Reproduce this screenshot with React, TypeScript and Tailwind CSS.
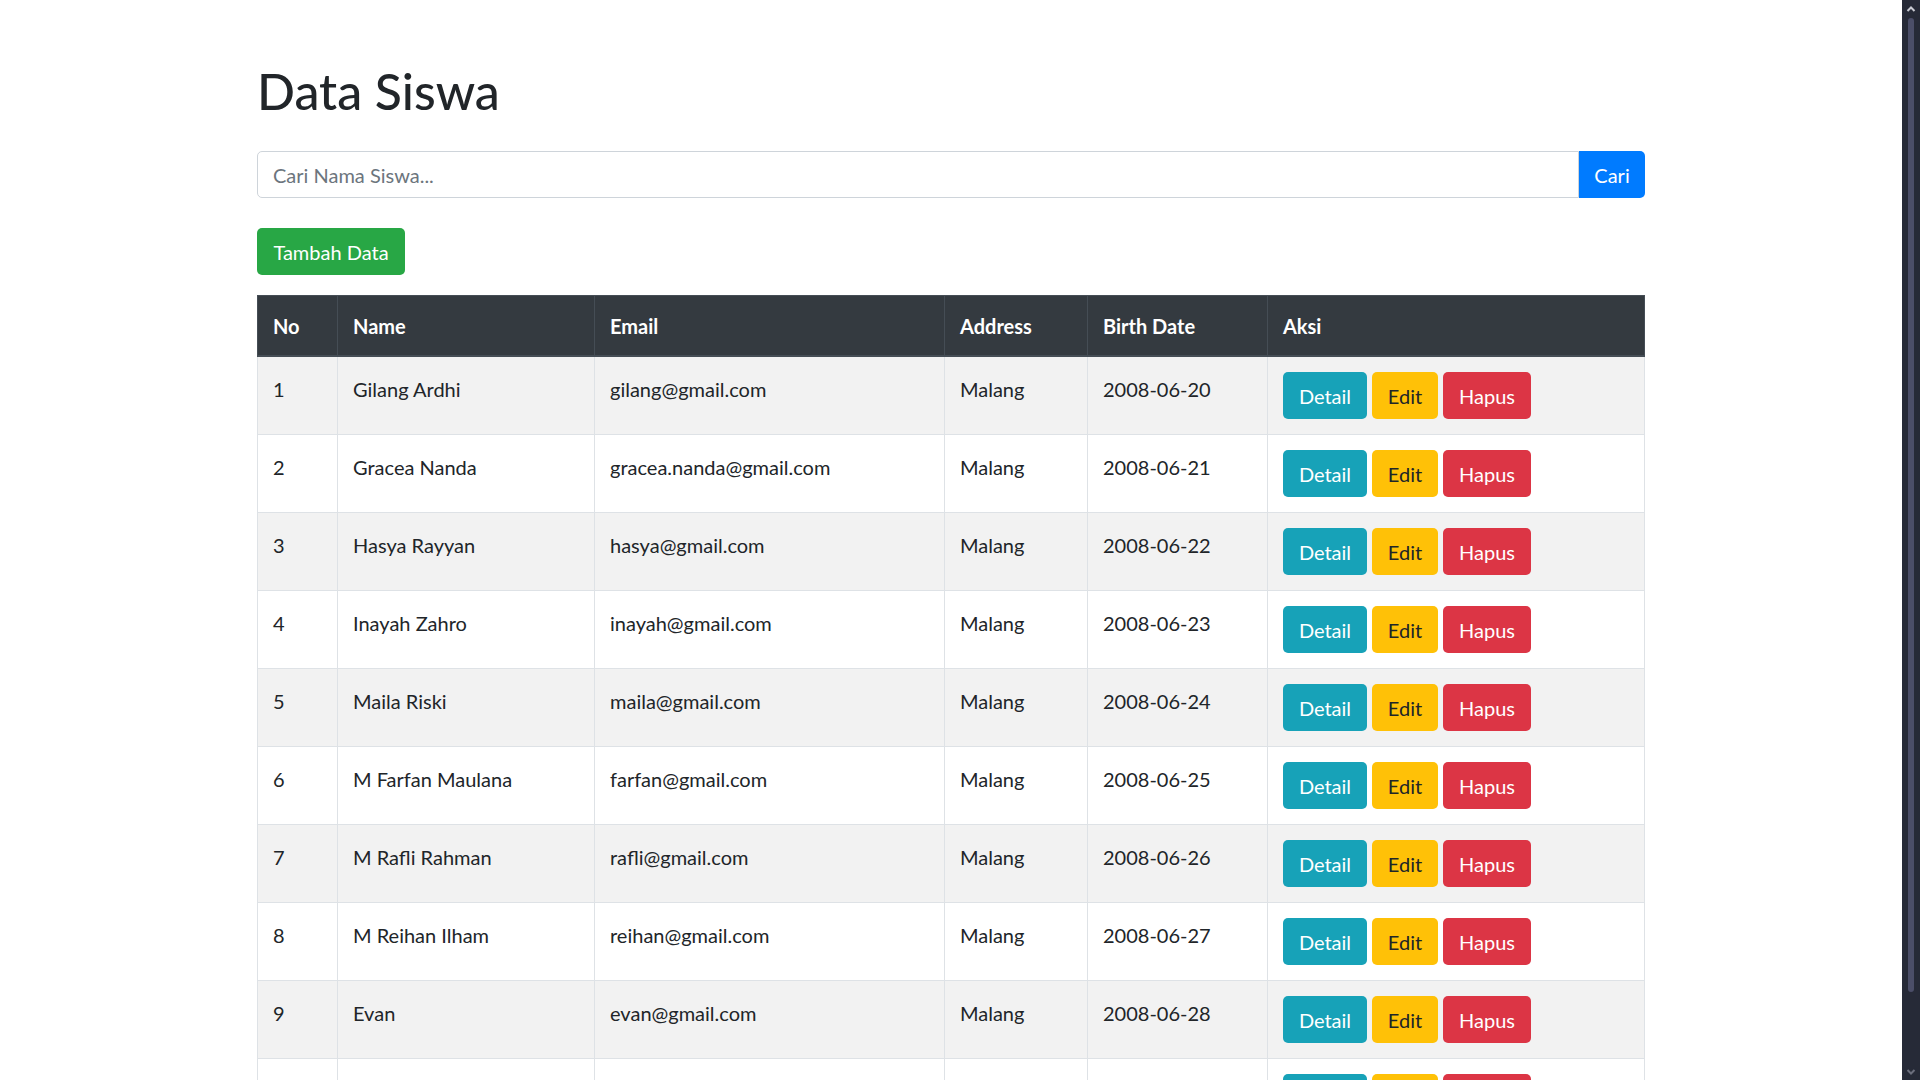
const siswa = [
  { no: 1, name: 'Gilang Ardhi', email: 'gilang@gmail.com', address: 'Malang', birth: '2008-06-20' },
  { no: 2, name: 'Gracea Nanda', email: 'gracea.nanda@gmail.com', address: 'Malang', birth: '2008-06-21' },
  { no: 3, name: 'Hasya Rayyan', email: 'hasya@gmail.com', address: 'Malang', birth: '2008-06-22' },
  { no: 4, name: 'Inayah Zahro', email: 'inayah@gmail.com', address: 'Malang', birth: '2008-06-23' },
  { no: 5, name: 'Maila Riski', email: 'maila@gmail.com', address: 'Malang', birth: '2008-06-24' },
  { no: 6, name: 'M Farfan Maulana', email: 'farfan@gmail.com', address: 'Malang', birth: '2008-06-25' },
  { no: 7, name: 'M Rafli Rahman', email: 'rafli@gmail.com', address: 'Malang', birth: '2008-06-26' },
  { no: 8, name: 'M Reihan Ilham', email: 'reihan@gmail.com', address: 'Malang', birth: '2008-06-27' },
  { no: 9, name: 'Evan', email: 'evan@gmail.com', address: 'Malang', birth: '2008-06-28' },
  { no: 10, name: 'Nabila Putri', email: 'nabila@gmail.com', address: 'Malang', birth: '2008-06-29' },
];

function Scrollbar() {
  return (
    <div className="w-[18px] h-full bg-[#262a37] flex flex-col items-center shrink-0">
      <svg width="10" height="8" viewBox="0 0 10 8" className="mt-[5px]">
        <path d="M1.5 6 L5 2.5 L8.5 6" stroke="#c9cbd3" strokeWidth="2" fill="none" />
      </svg>
      <div className="w-[6px] h-[974px] mt-[5px] rounded-full bg-[#4b4e68]" />
      <div className="flex-1" />
      <svg width="10" height="8" viewBox="0 0 10 8" className="mb-[4px]">
        <path d="M1.5 2 L5 5.5 L8.5 2" stroke="#6b6e7c" strokeWidth="2" fill="none" />
      </svg>
    </div>
  );
}

export default function App() {
  return (
    <div className="w-full h-screen flex overflow-hidden bg-white text-[#212529] font-['Lato',sans-serif] text-[20px] leading-[30px]">
      <div className="flex-1 overflow-hidden">
        <div className="w-[1388px] mx-auto pt-[61px]">
          <h1 className="text-[50px] leading-[60px] font-medium">Data Siswa</h1>

          {/* Search */}
          <div className="flex mt-[30px] h-[47px]">
            <input
              type="text"
              placeholder="Cari Nama Siswa..."
              className="flex-1 h-full px-[15px] border border-[#ced4da] rounded-l-[5px] outline-none placeholder:text-[#6c757d]"
            />
            <button className="w-[66px] h-full bg-[#007bff] text-white rounded-r-[5px]">Cari</button>
          </div>

          <button className="mt-[30px] w-[148px] h-[47px] bg-[#28a745] text-white rounded-[5px]">Tambah Data</button>

          {/* Table */}
          <table className="mt-[20px] w-full border-collapse table-fixed">
            <colgroup>
              <col className="w-[80px]" />
              <col className="w-[257px]" />
              <col className="w-[350px]" />
              <col className="w-[143px]" />
              <col className="w-[180px]" />
              <col />
            </colgroup>
            <thead>
              <tr className="bg-[#343a40] text-white text-left">
                {['No', 'Name', 'Email', 'Address', 'Birth Date', 'Aksi'].map((h) => (
                  <th key={h} className="px-[15px] pt-[15px] pb-[14px] border border-[#454d55] border-b-2 font-bold align-top">
                    {h}
                  </th>
                ))}
              </tr>
            </thead>
            <tbody>
              {siswa.map((s) => (
                <tr key={s.no} className="odd:bg-[#f2f2f2] bg-white">
                  <td className="px-[15px] pt-[17px] pb-[13px] border border-[#dee2e6] align-top">{s.no}</td>
                  <td className="px-[15px] pt-[17px] pb-[13px] border border-[#dee2e6] align-top">{s.name}</td>
                  <td className="px-[15px] pt-[17px] pb-[13px] border border-[#dee2e6] align-top">{s.email}</td>
                  <td className="px-[15px] pt-[17px] pb-[13px] border border-[#dee2e6] align-top">{s.address}</td>
                  <td className="px-[15px] pt-[17px] pb-[13px] border border-[#dee2e6] align-top">{s.birth}</td>
                  <td className="p-[15px] border border-[#dee2e6] align-top">
                    <div className="flex gap-[5px]">
                      <button className="w-[84px] h-[47px] rounded-[5px] bg-[#17a2b8] text-white">Detail</button>
                      <button className="w-[66px] h-[47px] rounded-[5px] bg-[#ffc107] text-[#212529]">Edit</button>
                      <button className="w-[88px] h-[47px] rounded-[5px] bg-[#dc3545] text-white">Hapus</button>
                    </div>
                  </td>
                </tr>
              ))}
            </tbody>
          </table>
        </div>
      </div>
      <Scrollbar />
    </div>
  );
}
